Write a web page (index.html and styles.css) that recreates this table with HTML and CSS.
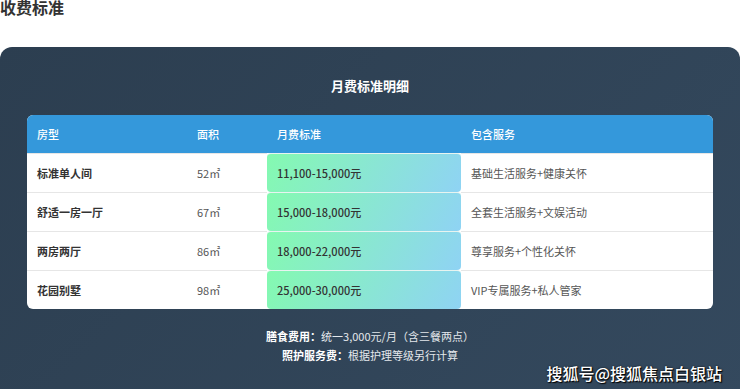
FILE: index.html
```html
<!DOCTYPE html>
<html lang="zh-CN">
<head>
<meta charset="utf-8">
<link rel="stylesheet" href="styles.css">
</head>
<body>
<h2 class="page-title">收费标准</h2>
<section class="card">
  <h3 class="card-title">月费标准明细</h3>
  <div class="table-wrap">
    <table class="fee-table">
      <colgroup>
        <col class="c-type"><col class="c-area"><col class="c-price"><col class="c-svc">
      </colgroup>
      <thead>
        <tr><th>房型</th><th>面积</th><th>月费标准</th><th>包含服务</th></tr>
      </thead>
      <tbody>
        <tr><td class="type">标准单人间</td><td class="area">52㎡</td><td class="price">11,100-15,000元</td><td class="svc">基础生活服务+健康关怀</td></tr>
        <tr><td class="type">舒适一房一厅</td><td class="area">67㎡</td><td class="price">15,000-18,000元</td><td class="svc">全套生活服务+文娱活动</td></tr>
        <tr><td class="type">两房两厅</td><td class="area">86㎡</td><td class="price">18,000-22,000元</td><td class="svc">尊享服务+个性化关怀</td></tr>
        <tr><td class="type">花园别墅</td><td class="area">98㎡</td><td class="price">25,000-30,000元</td><td class="svc">VIP专属服务+私人管家</td></tr>
      </tbody>
    </table>
  </div>
  <div class="notes">
    <p><strong>膳食费用：</strong>统一3,000元/月（含三餐两点）</p>
    <p><strong>照护服务费：</strong>根据护理等级另行计算</p>
  </div>
  <div class="watermark">搜狐号@搜狐焦点白银站</div>
</section>
</body>
</html>
```
FILE: styles.css
```css
html, body {
  margin: 0;
  padding: 0;
  background: #ffffff;
  overflow: hidden;
}
body {
  width: 740px;
  height: 389px;
  font-family: "Noto Sans CJK SC", "Noto Sans", sans-serif;
}
.page-title {
  margin: -1px 0 0 0;
  font-size: 16px;
  line-height: 16px;
  font-weight: 700;
  color: #333333;
}
.card {
  position: relative;
  margin-top: 32px;
  height: 360px;
  box-sizing: border-box;
  padding: 29px 27px 0 27px;
  border-radius: 12px;
  background: linear-gradient(135deg, #2c3e50 0%, #34495e 100%);
}
.card-title {
  margin: 0;
  text-align: center;
  font-size: 13px;
  line-height: 20px;
  font-weight: 700;
  color: #ffffff;
}
.table-wrap {
  margin-top: 19px;
  border-radius: 6px;
  overflow: hidden;
  background: #ffffff;
}
.fee-table {
  width: 686px;
  border-collapse: separate;
  border-spacing: 0;
  table-layout: fixed;
  font-size: 11px;
}
.c-type { width: 160px; }
.c-area { width: 80px; }
.c-price { width: 194px; }
.c-svc { width: 252px; }
.fee-table th {
  height: 38px;
  padding: 0 10px;
  text-align: left;
  font-weight: 500;
  color: #ffffff;
  background: #3498db;
  box-sizing: border-box;
}
.fee-table td {
  height: 39px;
  padding: 0 10px;
  box-sizing: border-box;
  border-top: 1px solid #e6e6e6;
  color: #555555;
}
.fee-table td.type {
  font-weight: 700;
  color: #333333;
}
.fee-table td.area {
  color: #555555;
}
.fee-table td.price {
  color: #333333;
  font-weight: 500;
  border-top: 1px solid #e8f4f0;
  border-radius: 4px;
  background: linear-gradient(120deg, #84fab0 0%, #8fd3f4 100%);
}
.notes {
  margin-top: 18px;
  text-align: center;
  font-size: 11px;
  line-height: 19px;
  color: #e4e8ec;
}
.notes p {
  margin: 0;
}
.notes strong {
  color: #ffffff;
  font-weight: 700;
}
.watermark {
  position: absolute;
  right: 18px;
  top: 315px;
  font-size: 16px;
  line-height: 22px;
  font-weight: 500;
  color: #ffffff;
  text-shadow: 1px 1px 1px #000000, 0 0 2px rgba(0,0,0,0.8);
}
```
